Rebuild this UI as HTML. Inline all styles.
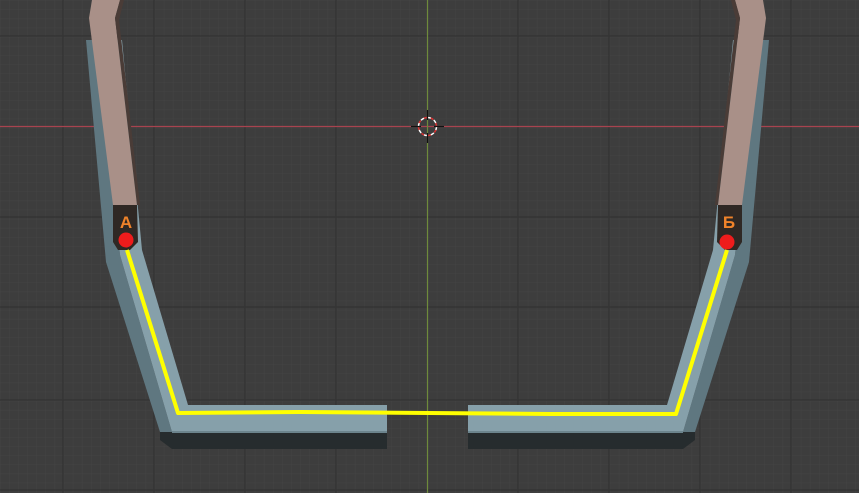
<!DOCTYPE html>
<html><head><meta charset="utf-8"><style>
html,body{margin:0;padding:0;background:#3d3d3d;overflow:hidden}
svg{display:block}
</style></head><body>
<svg width="859" height="493" viewBox="0 0 859 493" xmlns="http://www.w3.org/2000/svg">
<defs>
<pattern id="minor" width="9.1" height="9.1" patternUnits="userSpaceOnUse" x="0" y="0.4">
<path d="M0 0H9.1M0 0V9.1" stroke="#444" stroke-width="1" fill="none"/>
</pattern>
<g id="half">
<!-- frame dark bottom -->
<path d="M160 432 L387 432 L387 449 L172 449 L160 440 Z" fill="#262c2e"/>
<!-- frame outer side -->
<path d="M86 40 L98 40 L120 255 L172 432 L160 432 L106 262 Z" fill="#5f7780"/>
<!-- frame top -->
<path d="M98 40 L122 40 L142 250 L188 405 L387 405 L387 432 L172 432 L120 255 Z" fill="#86a0aa"/>
<path d="M172 432 L387 432" stroke="#6c848d" stroke-width="2"/>
<!-- brown bar -->
<path d="M92 0 L120 0 L115 18 L137 205 L113 205 L89 18 Z" fill="#a99088"/>
<path d="M120 0 L115 18 L137 205 L140 205 L119 20 L124 0Z" fill="#4a3c37"/>
<!-- dark end -->
<path d="M113 205 L137 205 L138 242 L130 250 L118 250 L113 242 Z" fill="#2f2824"/>
</g>
</defs>
<rect width="859" height="493" fill="#3d3d3d"/>
<rect width="859" height="493" fill="url(#minor)"/>
<g stroke="#353535" stroke-width="1.5">
<path d="M0 36H859M0 217H859M0 307H859M0 400H859M0 490H859"/>
<path d="M63 0V493M154 0V493M245 0V493M336 0V493M518 0V493M609 0V493M700 0V493M791 0V493"/>
</g>
<path d="M0 126.5H859" stroke="#a8434f" stroke-width="1.2"/>
<path d="M427.5 0V493" stroke="#6e8a3c" stroke-width="1.2"/>
<use href="#half"/>
<use href="#half" transform="translate(855 0) scale(-1 1)"/>
<polyline points="127,250 178,413 300,412 550,414 676,414 727,250" fill="none" stroke="#ffff00" stroke-width="4" stroke-linejoin="round"/>
<circle cx="126" cy="240" r="7.5" fill="#ee1c1c"/>
<circle cx="727" cy="242" r="7.5" fill="#ee1c1c"/>
<text x="126" y="228" font-family="Liberation Sans, sans-serif" font-weight="bold" font-size="17" fill="#f0832a" text-anchor="middle">А</text>
<text x="729" y="228" font-family="Liberation Sans, sans-serif" font-weight="bold" font-size="17" fill="#f0832a" text-anchor="middle">Б</text>
<circle cx="427.5" cy="126.5" r="9" fill="none" stroke="#fff" stroke-width="1.5" stroke-dasharray="4 3"/>
<circle cx="427.5" cy="126.5" r="9" fill="none" stroke="#d33" stroke-width="1.5" stroke-dasharray="3 4" stroke-dashoffset="3.5"/>
<path d="M427.5 110V120M427.5 133V143M411 126.5H421M434 126.5H444" stroke="#111" stroke-width="1.2"/>
</svg>
</body></html>
